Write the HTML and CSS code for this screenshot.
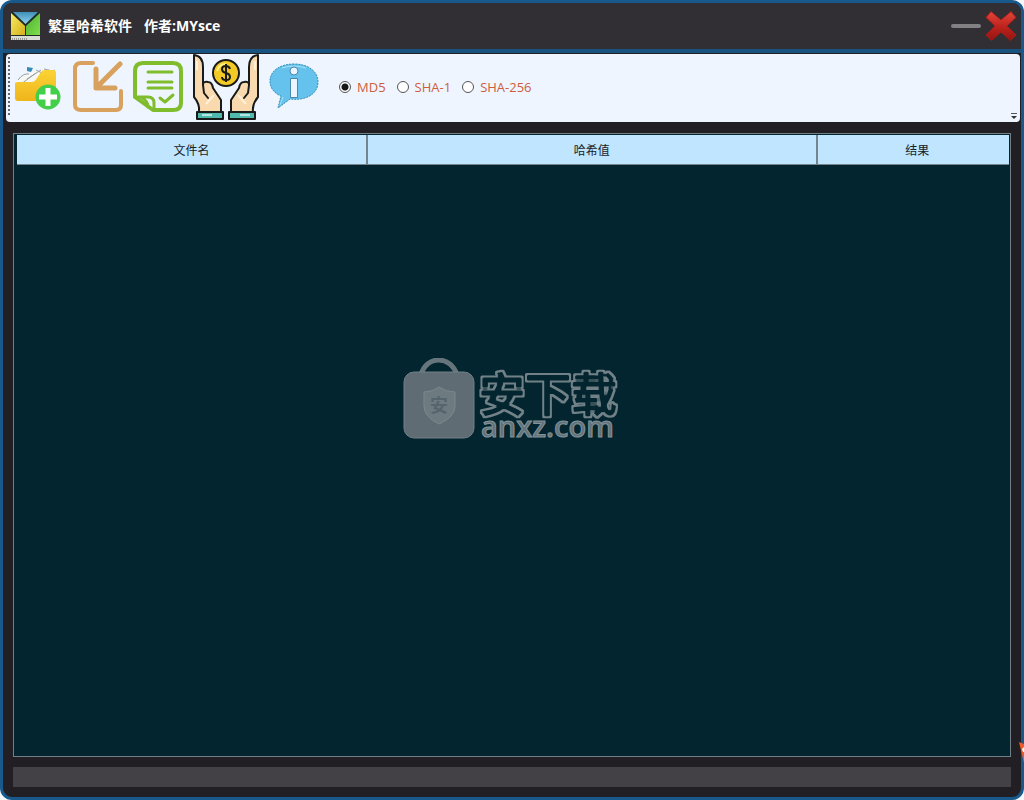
FILE: index.html
```html
<!DOCTYPE html>
<html lang="zh-CN">
<head>
<meta charset="utf-8">
<title>繁星哈希软件</title>
<link rel="stylesheet" href="styles.css">
</head>
<body>
<div class="window">
  <header class="titlebar">
    <svg class="app-icon" viewBox="0 0 30 30" aria-hidden="true">
      <defs>
        <linearGradient id="lb" x2="0" y2="1"><stop stop-color="#3f8fb8"/><stop offset="1" stop-color="#8fd3f0"/></linearGradient>
        <linearGradient id="ly" x2="1" y2="1"><stop stop-color="#f4ee62"/><stop offset="1" stop-color="#d8ad1c"/></linearGradient>
        <linearGradient id="lg" x2="1" y2="1"><stop stop-color="#4fae35"/><stop offset="1" stop-color="#7ee04a"/></linearGradient>
      </defs>
      <path fill="#202a24" d="M0 1h29v28H0z"/>
      <path fill="url(#lb)" d="M2 1h25L14.500 13z"/>
      <path fill="url(#ly)" d="M0 2l14 13v9H0z"/>
      <path fill="url(#lg)" d="M29 2v22H15v-9z"/>
      <path fill="#d9dcd4" d="M0 25h29v4H0z"/>
      <path stroke="#555" stroke-dasharray="1 1" d="M1 28h16"/>
    </svg>
    <h1 class="title"><span>繁星哈希软件</span><span>作者:MYsce</span></h1>
    <button class="win-btn minimize" type="button" aria-label="最小化"><svg viewBox="0 0 30 32"><path d="M2 16h26" stroke="#828083" stroke-width="4" stroke-linecap="round"/></svg></button>
    <button class="win-btn close" type="button" aria-label="关闭">
      <svg viewBox="0 0 32 32">
        <defs><linearGradient id="red" x2="0" y2="1"><stop stop-color="#e2463a"/><stop offset=".5" stop-color="#bf241e"/><stop offset="1" stop-color="#941311"/></linearGradient></defs>
        <path fill="url(#red)" stroke="#a51d19" d="M6 1.500L16 10 26 1.500l5 6L22 16l9 9-5.500 5.500L16 22l-9.500 8.500L1 25l9-9-9-8.500z" stroke-linejoin="round"/>
      </svg>
    </button>
  </header>

  <div class="toolbar">
    <span class="grip"></span>
    <button class="tool" type="button" aria-label="添加文件">
      <svg viewBox="0 0 50 64">
        <defs><linearGradient id="fold" x2="0" y2="1"><stop stop-color="#fbd335"/><stop offset="1" stop-color="#efb51b"/></linearGradient></defs>
        <g transform="translate(1 5)">
          <path fill="#f7f7f4" d="M2 22l9-8 12-3 14-3 5 8-2 10H4z"/>
          <path fill="none" stroke="#9aa0a6" d="M4 20q5-7 11-6M7 24l15-11M13 19l14-9M22 10l6 3M30 9l9 2M34 13l7-3"/>
          <path fill="#348bb5" d="M13 7l6 1-2 4-4-1z"/>
          <path fill="url(#fold)" d="M1 24q0-2 3-2h14q3 0 5-4l4-6q1-2 4-2h8q3 0 3 3v25q0 3-3 3H4q-3 0-3-3z"/>
          <circle cx="34" cy="37" r="12.500" fill="#43cf49"/>
          <path stroke="#fff" stroke-width="5" d="M34 28v18M25 37h18"/>
        </g>
      </svg>
    </button>
    <button class="tool" type="button" aria-label="导入">
      <svg viewBox="0 0 50 64" fill="none" stroke="#d8a15e" stroke-linecap="round">
        <path stroke-width="4" d="M20 8H8q-6 0-6 6v36q0 5 6 5h35q5 0 5-5V36"/>
        <path stroke-width="5" stroke-linejoin="round" d="M47 9L25 31M23 14v19h19"/>
      </svg>
    </button>
    <button class="tool" type="button" aria-label="校验">
      <svg viewBox="0 0 50 64" fill="none" stroke="#7fbd2d" stroke-width="4" stroke-linecap="round" stroke-linejoin="round">
        <path d="M10 8h30q8 0 8 8v32q0 7-8 7H20L2 42V16q0-8 8-8z"/>
        <path stroke-width="3" d="M2 42h13q6 0 6 6v6M9 43q6 3 6 9"/>
        <path stroke-width="3" d="M15 17h24M15 27h24M15 33h24M27 43l5 4 8-7"/>
      </svg>
    </button>
    <button class="tool hands" type="button" aria-label="打赏">
      <svg viewBox="0 0 66 66">
        <circle cx="33" cy="19" r="13" fill="#f3c925" stroke="#191b1b" stroke-width="2"/>
        <path d="M24 17q2-7 9-7" fill="none" stroke="#fff08a" stroke-width="2"/>
        <path d="M37 15q-1-3-4-3-4 0-4 3 0 3 4 4 4 1 4 4 0 3-4 3-4 0-4-3M33 10v18" fill="none" stroke="#191b1b" stroke-width="2"/>
        <g stroke="#191b1b" stroke-width="2" stroke-linejoin="round">
          <path fill="#f9d9ae" d="M1 1q9 1 9 12v18q0-4 5-3 4 0 5 6l8 12v12H6q1-8-5-15z"/>
          <path fill="none" stroke-linecap="round" d="M10 31l1 8 4 5"/>
          <path fill="none" stroke="#fff0d8" d="M4 7v9M13 50l8-9"/>
          <path fill="#4fb9ad" d="M4 58h26v7H4z"/>
          <path stroke="#b3e6df" d="M9 61h10"/>
        </g>
        <g stroke="#191b1b" stroke-width="2" stroke-linejoin="round" transform="matrix(-1 0 0 1 66 0)">
          <path fill="#f9d9ae" d="M1 1q9 1 9 12v18q0-4 5-3 4 0 5 6l8 12v12H6q1-8-5-15z"/>
          <path fill="none" stroke-linecap="round" d="M10 31l1 8 4 5"/>
          <path fill="none" stroke="#fff0d8" d="M4 7v9M13 50l8-9"/>
          <path fill="#4fb9ad" d="M4 58h26v7H4z"/>
          <path stroke="#b3e6df" d="M9 61h10"/>
        </g>
      </svg>
    </button>
    <button class="tool" type="button" aria-label="关于">
      <svg viewBox="0 0 50 64">
        <path fill="#64c2ec" stroke="#318eb8" stroke-dasharray="2 1" d="M25 9C11 9 1 16 1 26c0 7 4 12 11 15l-3 12 12-9C37 46 49 39 49 27 49 16 39 9 25 9z"/>
        <path fill="none" stroke="#a7e2f8" d="M13 13q12-4 24 0M11 50l3-8"/>
        <circle cx="25" cy="16" r="4" fill="#eaf5ff" stroke="#4b87ac"/>
        <path fill="#eaf5ff" stroke="#4b87ac" d="M21.500 23.500h7v19h-7z"/>
      </svg>
    </button>
    <fieldset class="algorithms" aria-label="哈希算法">
      <label><input type="radio" name="algo" checked>MD5</label>
      <label><input type="radio" name="algo">SHA-1</label>
      <label><input type="radio" name="algo">SHA-256</label>
    </fieldset>
    <svg class="overflow" viewBox="0 0 6 8" aria-hidden="true"><path d="M0 1.500h6" stroke="#555"/><path fill="#333" d="M0 4h6L3 7z"/></svg>
  </div>

  <main class="results">
    <table class="grid">
      <colgroup><col class="col-name"><col class="col-hash"><col class="col-result"></colgroup>
      <thead><tr><th>文件名</th><th>哈希值</th><th>结果</th></tr></thead>
    </table>
    <svg class="watermark" viewBox="0 0 220 94">
      <defs>
        <filter id="outline" x="-5%" y="-10%" width="110%" height="120%">
          <feMorphology in="SourceGraphic" operator="dilate" radius="1" result="wide"/>
          <feMorphology in="SourceGraphic" operator="erode" radius="1" result="narrow"/>
          <feComposite in="wide" in2="narrow" operator="out"/>
        </filter>
      </defs>
      <path d="M18 17C23-3 48-3 54 17" fill="none" stroke="#65757b" stroke-width="5"/>
      <rect x="1" y="14" width="70" height="66" rx="10" fill="#606c73" stroke="#718087"/>
      <path d="M36 29q7 5 16 5v14q0 11-16 18-15-7-15-18V34q8 0 15-5z" fill="#6d7a80" stroke="#7b888d"/>
      <text class="mark-small" x="36" y="54" text-anchor="middle">安</text>
      <text class="mark-cjk" x="76" y="53" filter="url(#outline)">安下载</text>
      <text class="mark-latin" x="78" y="79">anxz.com</text>
    </svg>
  </main>
  <footer class="statusbar"></footer>
</div>
<svg class="side-badge" viewBox="0 0 5 22" aria-hidden="true"><path fill="#ef5c2c" d="M0 1l5 2v19z"/><path fill="#fff" d="M3 8l2-2v5H4z"/></svg>
</body>
</html>
```

FILE: styles.css
```css
* { box-sizing: border-box; }

body {
  margin: 0;
  background: #f4f8fb;
  font-family: "Open Sans", "Noto Sans CJK SC", sans-serif;
  font-size: 12px;
  overflow: hidden;
}

button {
  padding: 0;
  border: 0;
  background: none;
}

svg { display: block; }

.window {
  display: flex;
  flex-direction: column;
  min-height: 100vh;
  border: 3px solid #18588a;
  border-radius: 12px;
  background: #211f23;
  overflow: hidden;
}

.titlebar {
  display: flex;
  align-items: center;
  height: 50px;
  padding: 0 4px 0 8px;
  gap: 4px;
  background: #312f33;
  border-bottom: 4px solid #18537f;
}

.app-icon { width: 30px; height: 30px; }

.title {
  display: flex;
  flex: 1;
  gap: 12px;
  margin: 0 0 0 3px;
  color: #fff;
  font-size: 14px;
  line-height: 20px;
  font-weight: 700;
}

.minimize svg { width: 30px; height: 32px; }
.close svg { width: 32px; height: 32px; }

.toolbar {
  position: relative;
  display: flex;
  align-items: center;
  height: 68px;
  margin: 1px 1px 0 3px;
  padding: 0 0 2px 2px;
  gap: 10px;
  background: #eef5ff;
  border-radius: 4px;
}

.grip {
  width: 2px;
  height: 60px;
  margin-right: -7px;
  background: repeating-linear-gradient(#686a70 0 2px, #eef5ff 2px 4px);
}

.tool svg { width: 50px; height: 64px; }
.hands svg { width: 66px; height: 66px; }

.algorithms {
  display: flex;
  gap: 11px;
  margin: 0 0 0 10px;
  padding: 0;
  border: 0;
  color: #cf5c3c;
  font-size: 13px;
  line-height: 20px;
}

.algorithms label {
  display: flex;
  align-items: center;
  gap: 6px;
}

.algorithms input {
  appearance: none;
  width: 12px;
  height: 12px;
  margin: 0;
  border: 1px solid #555;
  border-radius: 50%;
  background: #fff;
}

.algorithms input:checked {
  background: radial-gradient(circle, #161616 3px, #fff 4px);
}

.overflow {
  position: absolute;
  right: 3px;
  bottom: 2px;
  width: 6px;
  height: 8px;
}

.results {
  position: relative;
  flex: 1;
  margin: 11px 10px 10px;
  padding: 1px 1px 0 3px;
  border: 1px solid #708086;
  background: #02252f;
}

.grid {
  width: 100%;
  table-layout: fixed;
  border-collapse: separate;
  border-spacing: 0;
}

.col-name { width: 35.400%; }
.col-hash { width: 45.300%; }

.grid th {
  height: 30px;
  padding: 0;
  background: #bfe5ff;
  border-right: 2px solid #75848d;
  border-bottom: 1px solid #75848d;
  color: #17222a;
  font-weight: 400;
}

.grid th:last-child {
  padding-left: 8px;
  border-right: 0;
}

.watermark {
  position: absolute;
  top: 224px;
  left: calc(50% - 109px);
  width: 220px;
  height: 94px;
}

.mark-small {
  fill: #56656b;
  font: 700 18px "Noto Sans CJK SC", sans-serif;
}

.mark-cjk {
  fill: #718187;
  stroke: #718187;
  stroke-width: 3px;
  stroke-linejoin: round;
  font: 500 46px "Noto Sans CJK SC", sans-serif;
}

.mark-latin {
  fill: #63727a;
  stroke: #82949a;
  stroke-width: 1px;
  font: 600 29px "Open Sans", sans-serif;
}

.statusbar {
  height: 20px;
  margin: 0 10px 10px;
  background: #444146;
}

.side-badge {
  position: absolute;
  top: 741px;
  right: 0;
  width: 5px;
  height: 22px;
}
```
